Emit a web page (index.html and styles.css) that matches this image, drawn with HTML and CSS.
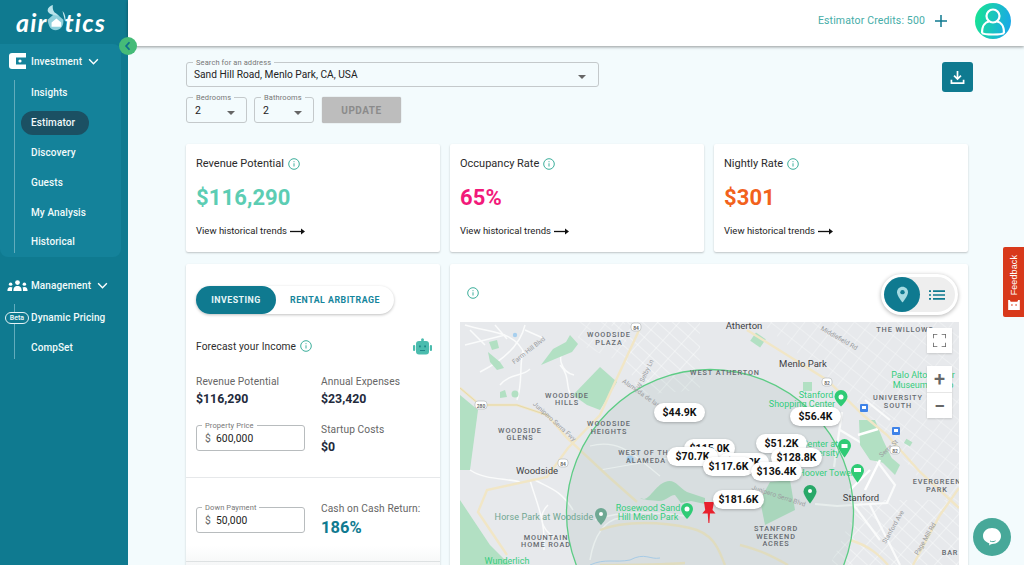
FILE: index.html
```html
<!DOCTYPE html>
<html lang="en">
<head>
<meta charset="utf-8">
<title>Airbtics Estimator</title>
<link rel="stylesheet" href="styles.css">
</head>
<body>
<div class="app">
  <aside class="sidebar">
    <div class="logo">
      <span>air</span>
      <svg class="logo-mark" viewBox="0 0 24 32"><path d="M3 18 12 10l9 8v2c0 6-4 10-9 10-5 0-8-4-9-12z" fill="#8fd0dc"/><path d="M7.500 21l5.500-4.500 5.500 4.500v5h-11z" fill="#fff"/><path d="M9 1c-1 6 2 10 7 12C9 13 3 11 3 7c0-3 3-5 6-6z" fill="#b9e3ea"/><path d="M20 8c3 3 4 8 3 12-1-4-2-8-3-12z" fill="#d3eef2"/></svg>
      <span>tics</span>
    </div>
    <button class="collapse" aria-label="Collapse"><svg viewBox="0 0 16 16"><path d="M10 3 5.500 8l4.500 5" fill="none" stroke="#0f6e8c" stroke-width="2.400"/></svg></button>
    <section class="group active-group">
      <div class="group-head">
        <svg class="head-icon" viewBox="0 0 17 16"><path d="M3 0h14v16H3a3 3 0 0 1-3-3V3a3 3 0 0 1 3-3z" fill="#fff"/><rect x="7" y="4.500" width="10" height="7" fill="#14829a"/><circle cx="11" cy="8" r="1.600" fill="#fff"/></svg>
        <span>Investment</span>
        <svg class="chev" viewBox="0 0 12 8"><path d="M1 1.500 6 6.500l5-5" fill="none" stroke="#fff" stroke-width="1.600"/></svg>
      </div>
      <ul class="sub">
        <li>Insights</li>
        <li class="current">Estimator</li>
        <li>Discovery</li>
        <li>Guests</li>
        <li>My Analysis</li>
        <li>Historical</li>
      </ul>
    </section>
    <section class="group second-group">
      <div class="group-head">
        <svg class="head-icon wide" viewBox="0 0 22 12"><circle cx="11" cy="2.800" r="2.600" fill="#fff"/><path d="M6.500 12c0-4 1.500-5.500 4.500-5.500s4.500 1.500 4.500 5.500z" fill="#fff"/><circle cx="3.500" cy="4.500" r="1.900" fill="#fff"/><path d="M0 12c0-3 1-4.500 3.500-4.500 1 0 1.500.2 2 .6C5 9 5 10.500 5 12z" fill="#fff"/><circle cx="18.500" cy="4.500" r="1.900" fill="#fff"/><path d="M22 12c0-3-1-4.500-3.500-4.500-1 0-1.500.2-2 .6.500 1 .500 2.400.500 3.900z" fill="#fff"/></svg>
        <span>Management</span>
        <svg class="chev" viewBox="0 0 12 8"><path d="M1 1.500 6 6.500l5-5" fill="none" stroke="#fff" stroke-width="1.600"/></svg>
      </div>
      <ul class="sub">
        <li><span class="beta">Beta</span>Dynamic Pricing</li>
        <li>CompSet</li>
      </ul>
    </section>
  </aside>

  <div class="main">
    <header class="topbar">
      <span class="credits">Estimator Credits: 500</span>
      <svg class="plus" viewBox="0 0 14 14"><path d="M7 1v12M1 7h12" stroke="#0f7a90" stroke-width="1.500" fill="none"/></svg>
      <div class="avatar"><svg viewBox="0 0 36 36"><circle cx="18" cy="13" r="6.500" fill="none" stroke="#fff" stroke-width="2.200"/><path d="M7 30c0-8 4-11 7-11.500M29 30c0-8-4-11-7-11.500M7 30c2 2 20 2 22 0" fill="none" stroke="#fff" stroke-width="2.200"/></svg></div>
    </header>

    <main class="content">
      <div class="filters">
        <div class="filter-fields">
          <div class="field search">
            <label>Search for an address</label>
            <span>Sand Hill Road, Menlo Park, CA, USA</span>
            <i class="caret"></i>
          </div>
          <div class="filter-row">
            <div class="field small"><label>Bedrooms</label><span>2</span><i class="caret"></i></div>
            <div class="field small"><label>Bathrooms</label><span>2</span><i class="caret"></i></div>
            <button class="update">UPDATE</button>
          </div>
        </div>
        <button class="download" aria-label="Download"><svg viewBox="0 0 16 16"><path d="M8 1v8.500M4.300 6 8 9.700 11.700 6" fill="none" stroke="#fff" stroke-width="1.800"/><path d="M1.500 10.500v3.500h13v-3.500" fill="none" stroke="#fff" stroke-width="1.800"/></svg></button>
      </div>

      <div class="stats">
        <article class="card stat">
          <h3>Revenue Potential <svg class="info" viewBox="0 0 12 12"><circle cx="6" cy="6" r="5.300" fill="none" stroke="#3cae9b"/><path d="M6 5.300v3.200M6 3.200v1" stroke="#3cae9b" fill="none"/></svg></h3>
          <p class="value mint">$116,290</p>
          <a class="trend">View historical trends <svg class="arrow" viewBox="0 0 15 7"><path d="M0 3.500h12" stroke="#111" stroke-width="1.300"/><path d="M11 .5l4 3-4 3z" fill="#111"/></svg></a>
        </article>
        <article class="card stat">
          <h3>Occupancy Rate <svg class="info" viewBox="0 0 12 12"><circle cx="6" cy="6" r="5.300" fill="none" stroke="#3cae9b"/><path d="M6 5.300v3.200M6 3.200v1" stroke="#3cae9b" fill="none"/></svg></h3>
          <p class="value pink">65%</p>
          <a class="trend">View historical trends <svg class="arrow" viewBox="0 0 15 7"><path d="M0 3.500h12" stroke="#111" stroke-width="1.300"/><path d="M11 .5l4 3-4 3z" fill="#111"/></svg></a>
        </article>
        <article class="card stat">
          <h3>Nightly Rate <svg class="info" viewBox="0 0 12 12"><circle cx="6" cy="6" r="5.300" fill="none" stroke="#3cae9b"/><path d="M6 5.300v3.200M6 3.200v1" stroke="#3cae9b" fill="none"/></svg></h3>
          <p class="value orange">$301</p>
          <a class="trend">View historical trends <svg class="arrow" viewBox="0 0 15 7"><path d="M0 3.500h12" stroke="#111" stroke-width="1.300"/><path d="M11 .5l4 3-4 3z" fill="#111"/></svg></a>
        </article>
      </div>

      <div class="lower">
        <article class="card forecast">
          <div class="tabs"><span class="tab on">INVESTING</span><span class="tab">RENTAL ARBITRAGE</span></div>
          <div class="forecast-title">
            <span>Forecast your Income</span>
            <svg class="info" viewBox="0 0 12 12"><circle cx="6" cy="6" r="5.300" fill="none" stroke="#3cae9b"/><path d="M6 5.300v3.200M6 3.200v1" stroke="#3cae9b" fill="none"/></svg>
            <svg class="robot" viewBox="0 0 19 17"><circle cx="9.500" cy="1.800" r="1.500" fill="#4bbcae"/><rect x="3" y="3" width="13" height="13.500" rx="3" fill="#4bbcae"/><rect x="0" y="7" width="2.200" height="6" rx="1" fill="#4bbcae"/><rect x="16.800" y="7" width="2.200" height="6" rx="1" fill="#4bbcae"/><rect x="6" y="7.500" width="1.800" height="1.800" fill="#1f8587"/><rect x="11.200" y="7.500" width="1.800" height="1.800" fill="#1f8587"/><rect x="7" y="12" width="5" height="1" fill="#1f8587"/></svg>
          </div>
          <div class="metrics">
            <div class="metric"><span>Revenue Potential</span><b>$116,290</b></div>
            <div class="metric"><span>Annual Expenses</span><b>$23,420</b></div>
            <div class="field money"><label>Property Price</label><em>$</em><span>600,000</span></div>
            <div class="metric"><span>Startup Costs</span><b>$0</b></div>
          </div>
          <div class="cash">
            <div class="field money"><label>Down Payment</label><em>$</em><span>50,000</span></div>
            <div class="metric"><span>Cash on Cash Return:</span><b class="big">186%</b></div>
          </div>
          <div class="next-row"></div>
        </article>

        <article class="card map-card">
          <div class="map-top">
            <svg class="info" viewBox="0 0 12 12"><circle cx="6" cy="6" r="5.300" fill="none" stroke="#3cae9b"/><path d="M6 5.300v3.200M6 3.200v1" stroke="#3cae9b" fill="none"/></svg>
            <div class="view-toggle">
              <span class="view-on"><svg viewBox="0 0 14 20"><path d="M7 0C3 0 0 3 0 7c0 5 7 13 7 13s7-8 7-13c0-4-3-7-7-7z" fill="#a6dbe2"/><circle cx="7" cy="7" r="2.800" fill="#0f7a90"/></svg></span>
              <svg class="list-icon" viewBox="0 0 16 10"><path d="M4 1.200h12M4 5h12M4 8.800h12" stroke="#0f7a90" stroke-width="1.700"/><path d="M0 1.200h2M0 5h2M0 8.800h2" stroke="#0f7a90" stroke-width="1.700"/></svg>
            </div>
          </div>
          <div class="map">
            <svg class="map-art" viewBox="460 322 499 243">
              <defs>
                <pattern id="streets" width="13" height="13" patternUnits="userSpaceOnUse" patternTransform="rotate(38)"><path d="M0 0h13M0 0v13" stroke="#fafbfb" stroke-width="1"/></pattern>
                <pattern id="streets2" width="10" height="16" patternUnits="userSpaceOnUse" patternTransform="rotate(-48)"><path d="M0 0h10M0 0v16" stroke="#fafbfb" stroke-width="1"/></pattern>
              </defs>
              <rect x="460" y="322" width="499" height="243" fill="#e7e9ec"/>
              <polygon points="610,322 760,322 860,405 920,480 959,510 959,322" fill="url(#streets)" opacity=".75"/>
              <polygon points="860,500 959,500 959,565 830,565" fill="url(#streets2)"/>
              <polygon points="610,322 700,322 700,390 640,395" fill="url(#streets2)"/>
              <polygon points="575,322 625,322 628,365 580,345" fill="url(#streets)" opacity=".7"/>
              <path d="M465 325c25 8 50 5 60 30M480 372c20-10 40-25 45-47M465 345l40-10M523 350c-4 18 0 32-6 50M500 385c10-12 22-8 30-16M566 350c-10 5-5 22 8 25M560 365c10 10 6 22 10 28M470 330l15 15M495 325l12 14M525 330l18 8" fill="none" stroke="#fafbfb" stroke-width="1.500"/>
              <path d="M470 470c15 10 35 8 50 12M530 480c6 22 16 40 14 70M535 480c14 8 26 10 38 30M548 505c-14 14-2 30 12 34M595 520c25-10 60-8 90-4M590 560c4-25 15-40 30-42" fill="none" stroke="#fafbfb" stroke-width="1.500"/>
              <path d="M840 430l25 15 30 40-8 18-50 3-22-2M865 400l25 20M870 505l30 60M842 412l-8 55M880 540l-30-40" fill="none" stroke="#fafbfb" stroke-width="2.200"/>
              <g fill="#b2e0c3">
                <polygon points="541,365 553,349 566,342 570,335 578,344 572,352 555,359"/>
                <polygon points="573,395 600,367 617,382 600,410 587,405"/>
                <polygon points="489,342 497,340 499,348 492,350"/>
                <polygon points="488,352 500,362 504,368 497,370 490,362"/>
                <polygon points="500,392 505,390 507,397 500,398"/>
                <circle cx="515" cy="394" r="3.500"/>
                <polygon points="460,395 478,410 470,470 460,470"/>
                <polygon points="460,500 490,545 510,565 460,565"/>
                <path d="M640 498c8 6 14-12 25-16 10-4 14 6 22 10l18 6v6l-14-3-10 2-6-8c-6 0-8 6-16 6l-12-1z"/>
                <polygon points="770,482 790,480 795,510 765,525 760,500"/>
                <polygon points="859,420 875,420 883,440 895,465 870,460 860,445"/>
                <rect x="752" y="335" width="12" height="10" transform="rotate(35 758 340)"/>
                <rect x="803" y="382" width="9" height="9"/>
                <polygon points="880,448 900,465 895,475 880,460"/>
                <rect x="905" y="440" width="7" height="5" transform="rotate(30 908 442)"/>
              </g>
              <path d="M590 446c30-8 45 10 70 30M600 470l80-14" stroke="#fafbfb" fill="none" stroke-width="1.200"/>
              <path d="M858 435l20-6M870 470l-20 20M880 460l-15 30" stroke="#fff" stroke-width="2.400" fill="none"/>
              <g fill="none" stroke="#f1e6c6" stroke-width="2.400">
                <path d="M640 328 600 415 568 448 547 477 487 490 478 512 507 555"/>
                <path d="M460 388 480 405 517 405 547 415 567 438 610 478 637 502"/>
                <path d="M600 530C625 520 663 522 690 528S720 555 725 565"/>
                <path d="M747 330 827 380 863 415 887 435 920 472 959 508"/>
                <path d="M913 565 940 515 959 488"/>
                <path d="M600 565c60 0 85-2 85-2M740 545c20 5 30 10 48 20M850 540c20 6 30 16 38 25"/>
              </g>
              <path d="M460 388 480 405 517 405 547 415" fill="none" stroke="#e5d9a9" stroke-width="1"/>
              <circle cx="710" cy="513" r="143.500" fill="#6d938a" fill-opacity=".12" stroke="#5dcc85" stroke-width="1.300"/>
              <path d="M590 565c15-7 25-2 40-5 15-8 20 0 30-2" fill="none" stroke="#a7cbe6" stroke-width="1"/>
              <circle cx="515" cy="335" r="2.200" fill="#a7cfee"/>
              <circle cx="630" cy="459" r="3.500" fill="#a7cfee"/>
              <g class="ml caps">
                <text x="609" y="337">WOODSIDE</text><text x="609" y="345">PLAZA</text>
                <text x="567" y="398">WOODSIDE</text><text x="567" y="405">HILLS</text>
                <text x="520" y="433">WOODSIDE</text><text x="520" y="440">GLENS</text>
                <text x="609" y="426">WOODSIDE</text><text x="609" y="434">HEIGHTS</text>
                <text x="646" y="455">WEST OF THE</text><text x="646" y="463">ALAMEDA</text>
                <text x="725" y="375">WEST ATHERTON</text>
                <text x="905" y="332">THE WILLOWS</text>
                <text x="898" y="400">UNIVERSITY</text><text x="898" y="408">SOUTH</text>
                <text x="546" y="540">MOUNTAIN</text><text x="546" y="547">HOME ROAD</text>
                <text x="776" y="531">STANFORD</text><text x="776" y="539">WEEKEND</text><text x="776" y="546">ACRES</text>
                <text x="937" y="484">EVERGREEN</text><text x="937" y="492">PARK</text>
                <text x="950" y="555">BAR</text>
              </g>
              <g class="ml city">
                <text x="744" y="329">Atherton</text><text x="803" y="367">Menlo Park</text>
                <text x="537" y="474">Woodside</text><text x="861" y="501">Stanford</text>
              </g>
              <g class="ml poi">
                <text x="816" y="398">Stanford</text><text x="802" y="407">Shopping Center</text>
                <text x="923" y="378">Palo Alto Junior</text><text x="923" y="388">Museum &amp; Zoo</text>
                <text x="648" y="511">Rosewood Sand</text><text x="648" y="520">Hill Menlo Park</text>
                <text x="507" y="564">Wunderlich</text>
                <text x="820" y="447">Center at</text><text x="820" y="456">University</text>
                <text x="826" y="476">Hoover Tower</text>
              </g>
              <text class="ml grey-poi" x="544" y="520">Horse Park at Woodside</text>
              <g class="ml road">
                <text x="0" y="0" transform="translate(530 352) rotate(-38)">Farm Hill Blvd</text>
                <text x="0" y="0" transform="translate(640 395) rotate(35)">Alameda de las</text>
                <text x="0" y="0" transform="translate(647 375) rotate(-65)">W Selby Ln</text>
                <text x="0" y="0" transform="translate(838 340) rotate(30)">Middlefield Rd</text>
                <text x="0" y="0" transform="translate(553 423) rotate(42)">Junipero Serra Fwy</text>
                <text x="0" y="0" transform="translate(778 498) rotate(18)">Junipero Serra Blvd</text>
                <text x="0" y="0" transform="translate(895 528) rotate(-60)">Stanford Ave</text>
                <text x="0" y="0" transform="translate(927 540) rotate(-60)">Page Mill Rd</text>
                <text x="0" y="0" transform="translate(890 450) rotate(-42)">Serra St</text>
              </g>
              <g class="shield"><rect x="631" y="323" width="10" height="8" rx="3"/><rect x="558" y="459" width="10" height="8" rx="3"/><rect x="822" y="378" width="10" height="8" rx="3"/><rect x="890" y="446" width="10" height="8" rx="3"/><rect x="475" y="401" width="12" height="8" rx="3"/></g>
              <g class="shield-t"><text x="636" y="329.500">84</text><text x="563" y="465.500">84</text><text x="827" y="384.500">82</text><text x="895" y="452.500">82</text><text x="481" y="407.500">280</text></g>
              <g fill="#2fcb75">
                <path d="M841 390a6.500 6.500 0 0 1 6.500 6.500c0 4-6.500 10-6.500 10s-6.500-6-6.500-10a6.500 6.500 0 0 1 6.500-6.500z"/>
                <path d="M844.500 439a6.500 6.500 0 0 1 6.500 6.500c0 4-6.500 12-6.500 12s-6.500-8-6.500-12a6.500 6.500 0 0 1 6.500-6.500z"/>
                <path d="M857.500 464a6.500 6.500 0 0 1 6.500 6.500c0 4-6.500 12-6.500 12s-6.500-8-6.500-12a6.500 6.500 0 0 1 6.500-6.500z"/>
                <path d="M687 503a6 6 0 0 1 6 6c0 4-6 10-6 10s-6-6-6-10a6 6 0 0 1 6-6z"/>
                <path d="M810 485a6.500 6.500 0 0 1 6.500 6.500c0 4-6.500 12-6.500 12s-6.500-8-6.500-12a6.500 6.500 0 0 1 6.500-6.500z" fill="#28a868"/>
              </g>
              <path d="M601 508a6 6 0 0 1 6 6c0 5-6 11-6 11s-6-6-6-11a6 6 0 0 1 6-6z" fill="#6ea893"/>
              <circle cx="601" cy="514" r="2" fill="#fff"/>
              <g fill="#fff"><circle cx="841" cy="397" r="2.500"/><rect x="841.500" y="444" width="6" height="4"/><rect x="854" y="468" width="7" height="4"/><circle cx="687" cy="509" r="2.500"/><circle cx="810" cy="491" r="2"/></g>
              <g fill="#3f83e8"><rect x="860" y="404" width="8" height="8" rx="1"/><rect x="892" y="427" width="8" height="8" rx="1"/></g>
              <g fill="#fff"><rect x="862" y="406" width="4" height="3"/><rect x="894" y="429" width="4" height="3"/></g>
              <path d="M704 502h10l-1.500 8 3 3.500h-5.500l-.6 9.500h-1l-.7-9.500h-5.500l3-3.500z" fill="#e8202c"/>
            </svg>
            <span class="pin p1">$44.9K</span>
            <span class="pin p2">$56.4K</span>
            <span class="pin p3">$115.0K</span>
            <span class="pin p4">$96.2K</span>
            <span class="pin p5">$70.7K</span>
            <span class="pin p6">$117.6K</span>
            <span class="pin p7">$51.2K</span>
            <span class="pin p8">$128.8K</span>
            <span class="pin p9">$136.4K</span>
            <span class="pin p10">$181.6K</span>
            <button class="map-btn full" aria-label="Fullscreen"><svg viewBox="0 0 12 12"><path d="M0 4V0h4M8 0h4v4M12 8v4H8M4 12H0V8" fill="none" stroke="#666" stroke-width="1.500"/></svg></button>
            <div class="zoomer"><span>+</span><span>&minus;</span></div>
          </div>
        </article>
      </div>
    </main>
  </div>
</div>
<aside class="feedback"><span>Feedback</span><svg viewBox="0 0 14 12"><path d="M0 0h2l1 2h8l1-2h2v12H0z" fill="#fff"/><circle cx="4.500" cy="6" r="1" fill="#d8391b"/><circle cx="9.500" cy="6" r="1" fill="#d8391b"/></svg></aside>
<button class="chat" aria-label="Chat"><svg viewBox="0 0 20 20"><path d="M10 1c5 0 9 3.500 9 8s-4 8-9 8c-1 0-2 1-3 1.500.3-1 .4-1.800.2-2.200C3.500 15 1 12.500 1 9c0-4.500 4-8 9-8z" fill="#fff"/><path d="M8 14c2 1 4 .8 5.500-.2" stroke="#47a899" fill="none"/></svg></button>
</body>
</html>
```
FILE: styles.css
```css
* { box-sizing: border-box; }
html, body { margin: 0; height: 100%; overflow: hidden; }
body { font-family: Roboto, "Liberation Sans", sans-serif; color: #222; background: #f3fbfd; }
button { font-family: inherit; border: 0; padding: 0; }
h3, p, ul { margin: 0; padding: 0; }
ul { list-style: none; }
svg { display: block; }

.app { display: flex; height: 565px; }

.sidebar { position: relative; flex: 0 0 128px; background: #0f7a90; color: #f2fafb; font-size: 10px; font-weight: 500; letter-spacing: .1px; }
.logo { height: 44px; display: flex; align-items: center; justify-content: center; padding-top: 0; margin-left: -6px; color: #fff; font: italic 700 25px Lato, sans-serif; letter-spacing: 1.200px; }
.logo-mark { width: 21px; height: 28px; margin: -9px -1px 0 -3px; }
.collapse { position: absolute; left: 119px; top: 37px; width: 18px; height: 18px; border-radius: 50%; background: #45bb78; z-index: 5; padding: 3px; }

.group-head { display: flex; align-items: center; height: 34px; padding-left: 31px; position: relative; }
.head-icon { position: absolute; left: 9px; top: 9px; width: 17px; height: 16px; }
.head-icon.wide { left: 7px; top: 12px; width: 21px; height: 11px; }
.chev { width: 11px; height: 7px; margin-left: 6px; }
.active-group { width: 121px; height: 213px; background: #14829a; border-radius: 0 8px 8px 8px; }
.second-group { padding-top: 11px; }
.second-group .sub { padding-top: 1px; }
.sub { position: relative; }
.sub::before { content: ""; position: absolute; left: 14px; top: 2px; bottom: 4px; width: 1px; background: #62acbc; }
.sub li { height: 29.800px; display: flex; align-items: center; padding-left: 31px; position: relative; }
.sub li.current { isolation: isolate; }
.sub li.current::before { content: ""; position: absolute; left: 21px; top: 3px; width: 68px; height: 24px; border-radius: 12px; background: #1b5063; z-index: -1; }
.beta { position: absolute; left: 5px; top: 9px; width: 24px; height: 12px; border: 1px solid #e5f3f6; border-radius: 7px; background: #0f7a90; font-size: 7px; line-height: 10px; text-align: center; letter-spacing: 0; z-index: 1; }

.main { flex: 1; min-width: 0; display: flex; flex-direction: column; }
.topbar { height: 46px; flex: none; background: #fff; box-shadow: 0 1px 3px rgba(0,0,0,.4); display: flex; align-items: center; justify-content: flex-end; padding: 0 13px 5px 0; position: relative; z-index: 2; }
.credits { color: #46ada8; font-size: 10.500px; letter-spacing: .15px; }
.plus { width: 14px; height: 14px; margin: 0 27px 0 9px; }
.avatar { width: 36px; height: 36px; border-radius: 50%; background: linear-gradient(100deg, #18e68f, #1aa3ee); }

.content { flex: 1; padding: 16px 51px 0 58px; position: relative; min-height: 0; overflow: hidden; }

.filters { display: flex; justify-content: space-between; height: 82px; }
.filter-fields { display: flex; flex-direction: column; gap: 10px; }
.filter-row { display: flex; gap: 7px; }
.field { position: relative; border: 1px solid #c4c9cb; border-radius: 3px; display: flex; align-items: center; font-size: 10.500px; color: #222; }
.field label { position: absolute; left: 6px; top: -5px; padding: 0 3px; background: #f3fbfd; color: #777; font-size: 7.500px; line-height: 9px; letter-spacing: .1px; }
.search { width: 413px; height: 25px; padding-left: 7px; font-size: 10.200px; }
.small { width: 61px; height: 26px; padding-left: 8px; }
.small + .small { width: 60px; }
.caret { position: absolute; right: 12px; top: 12px; border: 4px solid transparent; border-top: 4.500px solid #666; border-bottom: 0; }
.small .caret { right: 11px; top: 13px; }
.update { width: 79px; height: 26px; margin-left: 1px; background: #bdbdbd; color: #8b8b8b; font-size: 10px; font-weight: 700; letter-spacing: .5px; border-radius: 2px; box-shadow: 0 0 1px #999; }
.download { width: 31px; height: 30px; background: #0f7a90; border-radius: 3px; padding: 7px 8px; }

.card { background: #fff; box-shadow: 0 1px 2px rgba(0,0,0,.22); border-radius: 2px; }
.stats { display: grid; grid-template-columns: repeat(3, 254px); gap: 10px; }
.stat { height: 108px; padding: 13px 10px; }
.stat h3 { display: flex; align-items: center; gap: 4px; font-size: 11px; font-weight: 400; line-height: 13px; color: #2a2a2a; }
.info { width: 12px; height: 12px; flex: none; }
.value { font-size: 22px; font-weight: 700; line-height: 26px; margin-top: 15px; letter-spacing: .1px; }
.mint { color: #5ccdb3; }
.pink { color: #f2197a; }
.orange { color: #f2621c; }
.trend { display: flex; align-items: center; gap: 3px; margin-top: 14px; font-size: 9.500px; line-height: 12px; color: #1d1d1d; }
.arrow { width: 15px; height: 7px; }

.lower { display: grid; grid-template-columns: 254px 518px; gap: 10px; margin-top: 12px; }
.lower .card { height: 330px; }
.forecast { padding-top: 22px; position: relative; }
.forecast::after { content: ""; position: absolute; left: 0; right: 0; top: 282px; height: 20px; background: linear-gradient(180deg, rgba(225,230,231,0), rgba(225,230,231,.35)); }
.tabs { margin-left: 10px; width: 198px; height: 28px; border-radius: 14px; background: #fff; box-shadow: 0 1px 3px rgba(0,0,0,.25); display: flex; font-size: 8.800px; font-weight: 700; letter-spacing: .5px; color: #15859c; }
.tab { display: flex; align-items: center; justify-content: center; flex: 1; }
.tab.on { flex: 0 0 80px; background: #0f7a90; color: #e8f6f8; border-radius: 14px; }
.forecast-title { display: flex; align-items: center; gap: 4px; padding: 0 8px 0 10px; margin-top: 24px; font-size: 10.200px; color: #2d2d2d; letter-spacing: .1px; height: 16px; }
.robot { width: 19px; height: 17px; margin-left: auto; }
.metrics { display: grid; grid-template-columns: 125px 1fr; grid-auto-rows: 33px; padding: 21px 10px 0; row-gap: 15px; height: 123px; }
.metric { display: flex; flex-direction: column; gap: 2px; font-size: 10.200px; color: #666; letter-spacing: .1px; line-height: 13px; }
.metric b { font-size: 12.300px; line-height: 18px; color: #222a3c; letter-spacing: 0; }
.metric b.big { font-size: 16.500px; color: #0f7a90; line-height: 22px; }
.money { width: 109px; height: 26px; align-self: start; padding-left: 8px; gap: 5px; font-size: 10.300px; letter-spacing: .1px; border-color: #b8bcbe; }
.money label { background: #fff; left: 5px; }
.money em { font-style: normal; color: #666; }
.metrics .money { margin-top: 2px; }
.cash { display: grid; grid-template-columns: 125px 1fr; padding: 24px 10px 0; height: 85px; border-top: 1px solid #e6e8ea; border-bottom: 1px solid #dcdfe0; align-content: start; }
.cash .money { margin-top: 5px; }

.map-card { padding: 10px 10px 0; }
.map-top { display: flex; justify-content: space-between; height: 48px; padding-left: 7px; align-items: flex-start; }
.map-top .info { margin-top: 13px; }
.view-toggle { width: 77px; height: 41px; margin: 0 0 0 auto; border-radius: 21px; background: #eee; border: 3px solid #fff; box-shadow: 0 1px 4px rgba(0,0,0,.3); display: flex; align-items: center; }
.view-on { width: 36px; height: 35px; border-radius: 50%; background: #0f7a90; display: flex; align-items: center; justify-content: center; }
.view-on svg { width: 11px; height: 17px; }
.list-icon { width: 16px; height: 10px; margin-left: 9px; }

.map { position: relative; height: 272px; overflow: hidden; margin-right: -1px; }
.map-art { position: absolute; left: 0; top: 0; width: 499px; height: 243px; }
.ml text { text-anchor: middle; font-family: Roboto, sans-serif; }
.caps { font-size: 7.300px; font-weight: 500; fill: #666b70; letter-spacing: .9px; }
.city { font-size: 9.500px; fill: #3f4144; }
.poi { font-size: 9px; fill: #35cd7d; }
.grey-poi { text-anchor: middle; font-family: Roboto, sans-serif; font-size: 9px; fill: #6fa690; letter-spacing: .1px; }
.road { font-size: 6.500px; fill: #9a9c9f; }
.shield rect { fill: #fff; stroke: #b8bbbd; stroke-width: .7px; }
.shield-t text { font: 600 5px Roboto, sans-serif; text-anchor: middle; fill: #666; }

.pin { position: absolute; width: 51px; height: 19px; border-radius: 10px; background: #fff; color: #111; box-shadow: 0 1px 3px rgba(0,0,0,.25); font-size: 10.500px; font-weight: 700; line-height: 19px; text-align: center; }
.p1 { left: 194px; top: 81px; }
.p2 { left: 330px; top: 85px; }
.p3 { left: 224px; top: 117px; }
.p4 { left: 258px; top: 131px; }
.p5 { left: 207px; top: 125px; }
.p6 { left: 243px; top: 135px; }
.p7 { left: 296px; top: 112px; }
.p8 { left: 311px; top: 126px; }
.p9 { left: 291px; top: 140px; }
.p10 { left: 253px; top: 168px; }
.map-btn, .zoomer { position: absolute; left: 467px; width: 25px; background: #fff; box-shadow: 0 1px 2px rgba(0,0,0,.15); }
.full { top: 6px; height: 25px; padding: 6px; }
.zoomer { top: 44px; height: 52px; display: flex; flex-direction: column; color: #666; font-size: 20px; font-weight: 500; line-height: 26px; text-align: center; }
.zoomer span { height: 26px; }
.zoomer span + span { border-top: 1px solid #e6e6e6; }

.feedback { position: fixed; right: 0; top: 247px; width: 21px; height: 70px; background: #d8391b; border-radius: 2px 0 0 2px; display: flex; flex-direction: column; align-items: center; justify-content: flex-end; gap: 5px; padding-bottom: 7px; color: #fff; }
.feedback span { writing-mode: vertical-rl; transform: rotate(180deg); font-size: 9px; font-family: "Liberation Sans", sans-serif; letter-spacing: .1px; }
.feedback svg { width: 12px; height: 10px; }
.chat { position: fixed; left: 973px; top: 518px; width: 38px; height: 38px; border-radius: 50%; background: #47a899; padding: 9px; }
```
